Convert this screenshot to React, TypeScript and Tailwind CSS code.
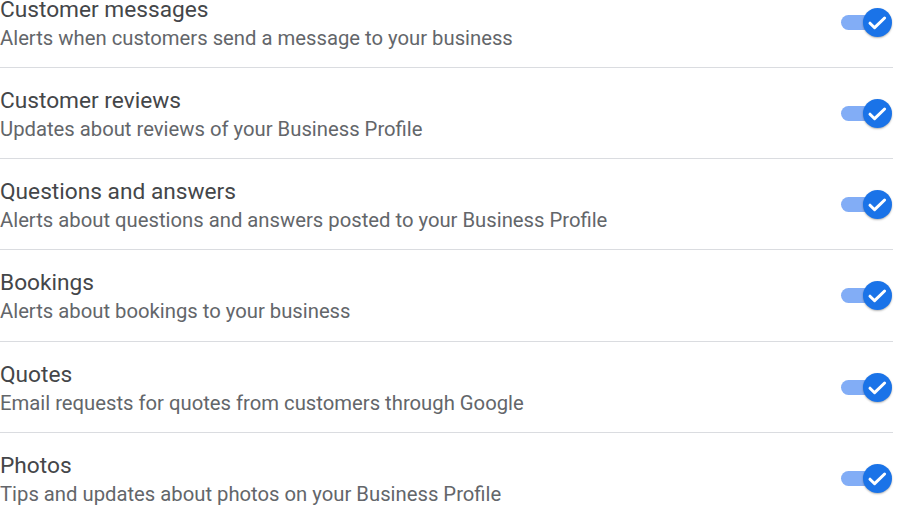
import React from "react";

const items = [
  { title: "Customer messages", desc: "Alerts when customers send a message to your business", h: "h-[91px]" },
  { title: "Customer reviews", desc: "Updates about reviews of your Business Profile", h: "h-[91px]" },
  { title: "Questions and answers", desc: "Alerts about questions and answers posted to your Business Profile", h: "h-[91px]" },
  { title: "Bookings", desc: "Alerts about bookings to your business", h: "h-[92px]" },
  { title: "Quotes", desc: "Email requests for quotes from customers through Google", h: "h-[91px]" },
  { title: "Photos", desc: "Tips and updates about photos on your Business Profile", h: "h-[91px]" },
];

const Toggle: React.FC = () => (
  <div className="relative h-[29px] w-[51px] shrink-0">
    {/* track */}
    <div className="absolute left-0 top-[7px] h-[15px] w-[44px] rounded-full bg-[#82adf6]" />
    {/* thumb */}
    <div className="absolute right-0 top-0 h-[29px] w-[29px] rounded-full bg-[#1a73e8] shadow-[0_1px_2px_rgba(0,0,0,0.3)]">
      <svg width="29" height="29" viewBox="0 0 29 29" fill="none">
        <path d="M7 15.2l4.6 4.5L21.6 10" stroke="white" strokeWidth="3" strokeLinecap="round" strokeLinejoin="round" />
      </svg>
    </div>
  </div>
);

export default function App() {
  return (
    <div className="h-[506px] w-[899px] overflow-hidden bg-white font-['Roboto',sans-serif]">
      <div className="-mt-[23px] w-[893px]">
        {items.map((item) => (
          <div
            key={item.title}
            className={`flex ${item.h} items-center justify-between border-b border-[#dadce0]`}
          >
            <div className="flex flex-col">
              <span className="text-[22.7px] leading-[31px] text-[#444649]">{item.title}</span>
              <span className="text-[20.25px] leading-[26px] text-[#63666a]">{item.desc}</span>
            </div>
            <div className="pr-[1px]">
              <Toggle />
            </div>
          </div>
        ))}
      </div>
    </div>
  );
}
